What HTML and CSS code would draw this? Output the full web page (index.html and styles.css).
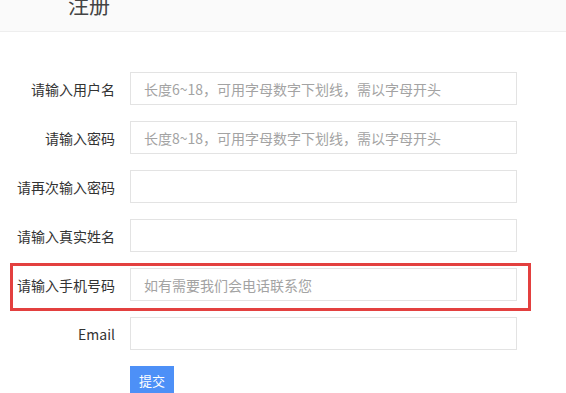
FILE: index.html
```html
<!DOCTYPE html>
<html lang="zh-CN">
<head>
<meta charset="utf-8">
<title>注册</title>
<link rel="stylesheet" href="styles.css">
</head>
<body>
<div class="header"><h1 class="title">注册</h1></div>
<form class="form">
  <div class="row"><label class="label">请输入用户名</label><input class="field" placeholder="长度6~18，可用字母数字下划线，需以字母开头"></div>
  <div class="row"><label class="label">请输入密码</label><input class="field" placeholder="长度8~18，可用字母数字下划线，需以字母开头"></div>
  <div class="row"><label class="label">请再次输入密码</label><input class="field"></div>
  <div class="row"><label class="label">请输入真实姓名</label><input class="field"></div>
  <div class="row highlighted"><label class="label">请输入手机号码</label><input class="field" placeholder="如有需要我们会电话联系您"><span class="mark"></span></div>
  <div class="row"><label class="label">Email</label><input class="field"></div>
  <div class="row actions"><span></span><button type="button" class="submit">提交</button></div>
</form>
</body>
</html>
```
FILE: styles.css
```css
* { box-sizing: border-box; }
html, body { margin: 0; padding: 0; background: #fff; }
body {
  font-family: "Noto Sans CJK SC", "Noto Sans", sans-serif;
  color: #333;
  overflow: hidden;
}
.header {
  height: 32px;
  background: #fafafa;
  border-bottom: 1px solid #eeeeee;
  overflow: hidden;
}
.title {
  margin: 0;
  padding-left: 68px;
  font-size: 21px;
  font-weight: normal;
  line-height: 21px;
  margin-top: -6px;
  color: #444;
}
.form {
  padding-top: 40px;
  display: flex;
  flex-direction: column;
  gap: 16px;
}
.row {
  position: relative;
  display: grid;
  grid-template-columns: 115px 387px;
  column-gap: 15px;
  align-items: center;
  height: 33px;
}
.label {
  text-align: right;
  font-size: 14px;
  color: #333;
  line-height: 20px;
}
.field {
  height: 33px;
  width: 387px;
  border: 1px solid #e3e3e3;
  background: #fff;
  padding: 0 13px;
  font-family: "Noto Sans CJK SC", "Noto Sans", sans-serif;
  font-size: 14px;
  color: #333;
  outline: none;
}
.field::placeholder { color: #a3a3a3; }
.mark {
  position: absolute;
  left: 10px;
  top: -5px;
  width: 521px;
  height: 48px;
  border: 3px solid #e3403f;
  pointer-events: none;
}
.actions { align-items: start; }
.submit {
  width: 44px;
  height: 28px;
  border: none;
  background: #4d90f7;
  color: #fff;
  font-family: "Noto Sans CJK SC", sans-serif;
  font-size: 13px;
  padding: 0;
}
```
